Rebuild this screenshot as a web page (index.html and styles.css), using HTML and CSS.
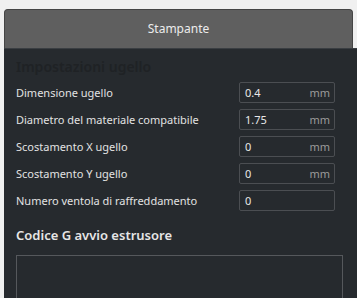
FILE: index.html
```html
<!DOCTYPE html>
<html lang="it">
<head>
    <meta charset="UTF-8">
    <title>Stampante</title>
    <link rel="stylesheet" href="styles.css">
</head>
<body>
    <div class="tab">Stampante</div>
    <div class="panel">
        <h2 class="section-title dim">Impostazioni ugello</h2>

        <div class="setting">
            <span class="setting-label">Dimensione ugello</span>
            <div class="field"><span class="value">0.4</span><span class="unit">mm</span></div>
        </div>
        <div class="setting">
            <span class="setting-label">Diametro del materiale compatibile</span>
            <div class="field"><span class="value">1.75</span><span class="unit">mm</span></div>
        </div>
        <div class="setting">
            <span class="setting-label">Scostamento X ugello</span>
            <div class="field"><span class="value">0</span><span class="unit">mm</span></div>
        </div>
        <div class="setting">
            <span class="setting-label">Scostamento Y ugello</span>
            <div class="field"><span class="value">0</span><span class="unit">mm</span></div>
        </div>
        <div class="setting">
            <span class="setting-label">Numero ventola di raffreddamento</span>
            <div class="field"><span class="value">0</span></div>
        </div>

        <h2 class="section-title">Codice G avvio estrusore</h2>
        <div class="gcode"></div>
    </div>
</body>
</html>
```

FILE: styles.css
```css
body {
    margin: 0;
    padding: 9px 0 0 4px;
    background-color: #f0f0f0;
    font-family: 'Noto Sans', 'Open Sans', sans-serif;
    overflow: hidden;
}

.tab {
    width: 347px;
    height: 38px;
    line-height: 38px;
    background-color: #5f5f5f;
    border: 1px solid #454545;
    border-bottom: none;
    border-radius: 4px 4px 0 0;
    color: #ececec;
    font-size: 12px;
    text-align: center;
}

.panel {
    background-color: #262a2e;
    border-top: 1px solid #3a3e42;
    padding: 8px 0 0 12px;
    height: 241px;
    overflow: hidden;
}

.section-title {
    margin: 0;
    font-size: 13px;
    font-weight: 600;
    color: #e6e6e6;
}

.section-title.dim {
    color: #1f2225;
    font-size: 14px;
    height: 22px;
}

.setting {
    display: flex;
    align-items: center;
    justify-content: space-between;
    width: 319px;
    height: 27px;
}

.setting-label {
    font-size: 11px;
    color: #e2e2e2;
}

.field {
    display: flex;
    align-items: center;
    justify-content: space-between;
    box-sizing: border-box;
    width: 96px;
    height: 21px;
    padding: 0 4px 0 5px;
    border: 1px solid #4b4e52;
    border-radius: 2px;
    font-size: 11px;
}

.value {
    color: #e8e8e8;
}

.unit {
    color: #9b9b9b;
}

.panel > .section-title:not(.dim) {
    margin-top: 12px;
}

.gcode {
    margin-top: 11px;
    width: 325px;
    height: 60px;
    border: 1px solid #55585c;
}
```
